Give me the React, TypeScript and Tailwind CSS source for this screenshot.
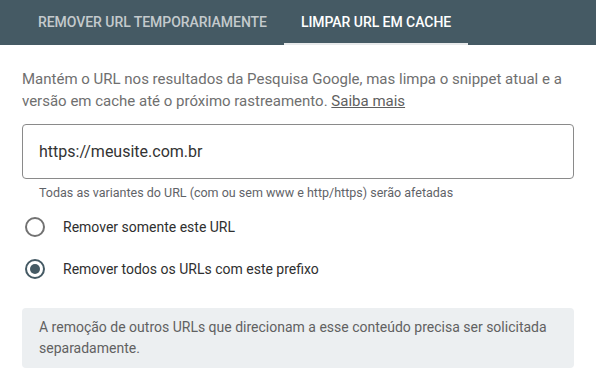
import React from "react";

const App = () => {
  return (
    <div className="w-[596px] h-[377px] bg-white font-['Roboto',sans-serif] overflow-hidden">
      {/* Tabs */}
      <div className="flex h-[45px] bg-[#455a64] px-[21px]">
        <div className="flex items-center px-[17px] text-[14px] font-medium uppercase text-[#c4cacd] tracking-[-0.05px]">
          Remover URL temporariamente
        </div>
        <div className="flex items-center px-[17px] text-[14px] font-medium uppercase text-white tracking-[-0.05px] border-b-[2px] border-[#e8eaeb] pt-[2px]">
          Limpar URL em cache
        </div>
      </div>

      <div className="px-[22px]">
        <p className="mt-[23px] text-[15px] leading-[22px] text-[#6f6f6f]">
          Mantém o URL nos resultados da Pesquisa Google, mas limpa o snippet atual e a versão em cache até o próximo rastreamento.{" "}
          <span className="underline text-[#5f5f5f]">Saiba mais</span>
        </p>

        <div className="mt-[12px] h-[55px] rounded-[4px] border border-[#8a8a8a] flex items-center px-[16px] text-[16px] text-[#333333]">
          https://meusite.com.br
        </div>
        <div className="mt-[6px] px-[17px] text-[12.5px] leading-[16px] text-[#5f6368]">
          Todas as variantes do URL (com ou sem www e http/https) serão afetadas
        </div>

        <div className="mt-[16px] flex flex-col gap-[22px]">
          <label className="flex items-center gap-[18px] h-[20px] text-[14px] text-[#2f2f2f]">
            <span className="ml-[3px] w-[20px] h-[20px] rounded-full border-2 border-[#727272]" />
            Remover somente este URL
          </label>
          <label className="flex items-center gap-[18px] h-[20px] text-[14px] text-[#2f2f2f]">
            <span className="ml-[3px] w-[20px] h-[20px] rounded-full border-2 border-[#455a64] flex items-center justify-center">
              <span className="w-[10px] h-[10px] rounded-full bg-[#455a64]" />
            </span>
            Remover todos os URLs com este prefixo
          </label>
        </div>

        <div className="mt-[29px] rounded-[4px] bg-[#eceff1] px-[17px] py-[9px] text-[14px] leading-[21px] text-[#616161]">
          A remoção de outros URLs que direcionam a esse conteúdo precisa ser solicitada separadamente.
        </div>
      </div>
    </div>
  );
};

export default App;
